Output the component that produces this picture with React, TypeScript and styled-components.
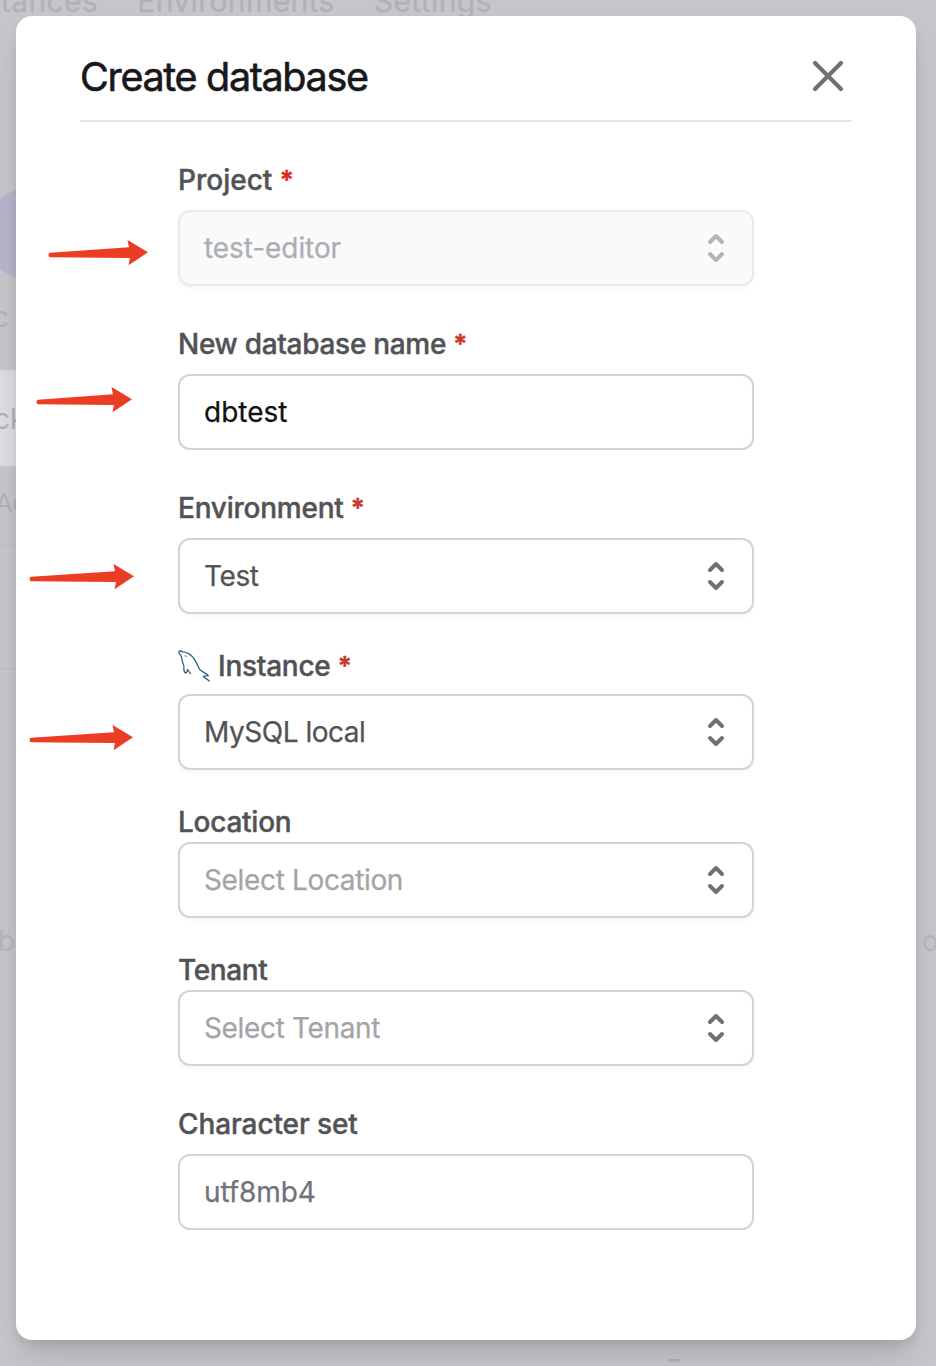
import React from "react";
import styled, { createGlobalStyle } from "styled-components";

const GlobalStyle = createGlobalStyle`
  * { box-sizing: border-box; }
  body {
    margin: 0;
    font-family: Inter, "Liberation Sans", sans-serif;
    background: #c5c6ca;
  }
`;

const Page = styled.div`
  position: relative;
  width: 936px;
  height: 1366px;
  padding: 16px 20px 26px 16px;
  overflow: hidden;
  background: #c5c6ca;
`;

const Backdrop = styled.div`
  position: absolute;
  inset: 0;
  display: flex;
  flex-direction: column;
  overflow: hidden;
  font-size: 28px;
  line-height: 32px;
  white-space: nowrap;
  color: #b1b2b7;
`;

const Nav = styled.nav`
  display: flex;
  gap: 39px;
  height: 18px;
  padding-bottom: 1px;
  margin-left: -42px;
  align-items: flex-end;
  font-size: 30px;
  letter-spacing: 0.4px;
  -webkit-text-stroke: 0.3px #b1b2b7;
`;

const Columns = styled.div`
  flex: 1;
  display: flex;
  justify-content: space-between;
`;

const Sidebar = styled.div`
  display: flex;
  flex-direction: column;
  width: 80px;
`;

const Avatar = styled.div`
  width: 94px;
  height: 94px;
  margin: 169px 0 0 -15px;
  border-radius: 50%;
  background: #b5b4ca;
`;

const OwnerName = styled.div`
  margin: 20px 0 37px -7px;
`;

const ActiveRow = styled.div`
  display: flex;
  align-items: center;
  height: 96px;
  padding-top: 2px;
  text-indent: -6px;
  background: #dcdde2;
`;

const SidebarRow = styled.div`
  height: 81px;
  padding-top: 21px;
  text-indent: -5px;
  font-size: 26px;
  letter-spacing: -1px;
  border-bottom: 2px solid #c1c2c6;
`;

const EmptyRow = styled.div`
  height: 123px;
  border-bottom: 2px solid #c0c1c5;
`;

const TableText = styled.div`
  margin: 255px 0 0 -2px;
  color: #b5b6bb;
`;

const FarColumn = styled.div`
  width: 14px;
  padding-top: 907px;
  color: #b5b6bb;
`;

const Dash = styled.div`
  width: 12px;
  height: 3px;
  margin: 0 0 4px 668px;
  background: #b2b2b6;
`;

const Dialog = styled.main`
  position: relative;
  height: 1324px;
  padding: 0 64px;
  border-radius: 16px;
  background: #fff;
  box-shadow: 0 20px 30px -6px rgba(0, 0, 0, 0.13), 0 6px 12px -2px rgba(0, 0, 0, 0.09);
`;

const Header = styled.header`
  display: flex;
  align-items: center;
  justify-content: space-between;
  height: 106px;
  padding: 16px 8px 0 0;
  border-bottom: 2px solid #e4e4e6;
`;

const Title = styled.h1`
  margin: 2px 0 0;
  font-size: 39.5px;
  line-height: 48px;
  font-weight: 400;
  letter-spacing: -1.33px;
  color: #18181a;
  -webkit-text-stroke: 0.6px #18181a;
`;

const CloseButton = styled.button`
  display: flex;
  padding: 0;
  border: 0;
  background: none;
  color: #717174;
`;

const Form = styled.form`
  display: flex;
  flex-direction: column;
  width: 576px;
  margin: 38px auto 0;
`;

const Field = styled.div<{ $gap: number; $before: number }>`
  display: flex;
  flex-direction: column;
  gap: ${(p) => p.$gap}px;
  margin-top: ${(p) => p.$before}px;
`;

const Label = styled.label<{ $spacing: number }>`
  display: flex;
  align-items: center;
  height: 40px;
  font-size: 28px;
  line-height: 40px;
  font-weight: 500;
  letter-spacing: ${(p) => p.$spacing}px;
  white-space: pre;
  color: #525355;
  -webkit-text-stroke: 0.4px currentColor;
`;

const Required = styled.span<{ $bright?: boolean }>`
  margin-left: 7px;
  font-size: 26px;
  font-weight: 700;
  letter-spacing: 0;
  color: ${(p) => (p.$bright ? "#dc2a1c" : "#c43a2c")};
`;

const Control = styled.div<{ $disabled?: boolean; $color: string; $spacing: number; $raised: boolean }>`
  display: flex;
  align-items: center;
  justify-content: space-between;
  height: 76px;
  padding: 0 16px 0 24px;
  border: 2px solid ${(p) => (p.$disabled ? "#e8eaec" : "#d3d4d6")};
  border-radius: 12px;
  background: ${(p) => (p.$disabled ? "#f9fafc" : "#fff")};
  box-shadow: ${(p) => (p.$raised ? "0 2px 4px rgba(0, 0, 0, 0.04)" : "none")};
  font-size: 28px;
  line-height: 40px;
  letter-spacing: ${(p) => p.$spacing}px;
  color: ${(p) => p.$color};
  -webkit-text-stroke: 0.25px currentColor;
`;

const Annotation = styled.svg<{ $x: number; $y: number }>`
  position: absolute;
  left: ${(p) => p.$x}px;
  top: ${(p) => p.$y}px;
`;

const DolphinSvg = styled.svg`
  margin-right: 8px;
  flex: none;
`;

const SelectorIcon = ({ color }: { color: string }) => (
  <svg width="40" height="40" viewBox="0 0 20 20" fill="none" stroke={color} strokeWidth="2" strokeLinecap="round" strokeLinejoin="round">
    <path d="M7 7l3-3 3 3m0 6l-3 3-3-3" />
  </svg>
);

const Dolphin = () => (
  <DolphinSvg width="32" height="32" viewBox="0 0 32 32" fill="none" stroke="#2f6478" strokeWidth="1.3" strokeLinecap="round" strokeLinejoin="round">
    <path d="M12.500 23.500C11.500 22.500 10.500 21 9.600 19.500C8.900 21.500 9.200 22.500 7.800 23.200C6.200 22.400 5.700 19.500 5.900 17.500C6.200 15.500 5 13.500 4.400 11.500C3.800 9.500 4 7.500 2.900 5.700C2.100 4.500 .7 3 .9 1.700C1.200 .6 3.500 .9 4.800 1.900C9 2.200 13.500 5.200 16.200 9C18.800 12.500 19.600 16 21.500 19.300C23.500 21.500 28 23 30.300 25.700C28.500 26 26.500 25.700 25.400 26.300C26.500 28 29.500 29 31.200 31" />
    <path d="M7.200 5.600l1 1.200" strokeWidth="1" />
  </DolphinSvg>
);

const Arrow = ({ x, y, width }: { x: number; y: number; width: number }) => (
  <Annotation $x={x} $y={y} width={width} height="26" viewBox={`0 0 ${width} 26`}>
    <path
      fill="#ea3d23"
      d={`M2 12.700L${width - 19} 7.300L${width - 20.500} 0L${width} 12.300L${width - 19.500} 25.300L${width - 18} 18L2 17.200Q.5 16.800 .5 15Q.5 13 2 12.700Z`}
    />
  </Annotation>
);

interface FieldSpec {
  label: string;
  value: string;
  gap: number;
  before: number;
  color: string;
  labelSpacing: number;
  valueSpacing: number;
  required?: boolean;
  select?: boolean;
  disabled?: boolean;
  icon?: boolean;
}

const fields: FieldSpec[] = [
  { label: "Project", value: "test-editor", gap: 10, before: 0, color: "#adaeb0", labelSpacing: 0, valueSpacing: -0.08, required: true, select: true, disabled: true },
  { label: "New database name", value: "dbtest", gap: 10, before: 38, color: "#111", labelSpacing: -0.3, valueSpacing: 0, required: true },
  { label: "Environment", value: "Test", gap: 10, before: 38, color: "#525355", labelSpacing: -0.24, valueSpacing: -0.4, required: true, select: true },
  { label: "Instance", value: "MySQL local", gap: 8, before: 32, color: "#525355", labelSpacing: -0.25, valueSpacing: -0.47, required: true, select: true, icon: true },
  { label: "Location", value: "Select Location", gap: 0, before: 32, color: "#a3a4a8", labelSpacing: -0.25, valueSpacing: -0.35, select: true },
  { label: "Tenant", value: "Select Tenant", gap: 0, before: 32, color: "#a3a4a8", labelSpacing: -0.4, valueSpacing: -0.35, select: true },
  { label: "Character set", value: "utf8mb4", gap: 10, before: 38, color: "#6f737b", labelSpacing: -0.1, valueSpacing: -0.1 },
];

export default function App() {
  return (
    <Page>
      <GlobalStyle />
      <Backdrop>
        <Nav>
          <span>Instances</span>
          <span>Environments</span>
          <span>Settings</span>
        </Nav>
        <Columns>
          <Sidebar>
            <Avatar />
            <OwnerName>c</OwnerName>
            <ActiveRow>ck</ActiveRow>
            <SidebarRow>Ad</SidebarRow>
            <EmptyRow />
            <TableText>b</TableText>
          </Sidebar>
          <FarColumn>o</FarColumn>
        </Columns>
        <Dash />
      </Backdrop>
      <Dialog>
        <Header>
          <Title>Create database</Title>
          <CloseButton type="button" aria-label="Close">
            <svg width="32" height="32" viewBox="0 0 32 32" fill="none" stroke="currentColor" strokeWidth="4.2" strokeLinecap="round">
              <path d="M3 3l26 26M29 3L3 29" />
            </svg>
          </CloseButton>
        </Header>
        <Form>
          {fields.map((f, i) => (
            <Field key={f.label} $gap={f.gap} $before={f.before}>
              <Label $spacing={f.labelSpacing}>
                {f.icon && <Dolphin />}
                {f.label}
                {f.required && <Required $bright={i === 0}>*</Required>}
              </Label>
              <Control $disabled={f.disabled} $color={f.color} $spacing={f.valueSpacing} $raised={!!f.select}>
                {f.value}
                {f.select && <SelectorIcon color={f.disabled ? "#b4b5b7" : "#717174"} />}
              </Control>
            </Field>
          ))}
        </Form>
      </Dialog>
      <Arrow x={48} y={240} width={100} />
      <Arrow x={35.5} y={387} width={96} />
      <Arrow x={29} y={564} width={105} />
      <Arrow x={29} y={725} width={104} />
    </Page>
  );
}
